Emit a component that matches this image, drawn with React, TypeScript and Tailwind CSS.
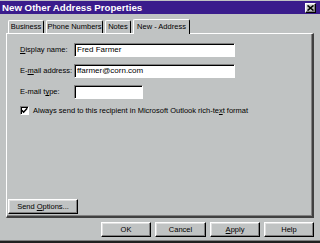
const raised =
  "border border-t-white border-l-white border-r-black border-b-black shadow-[inset_-1px_-1px_0_#808080,inset_1px_1px_0_#dfdfdf]";
const sunken =
  "border border-t-[#808080] border-l-[#808080] border-r-white border-b-white shadow-[inset_1px_1px_0_#000]";

function Field({ label, ul, rest, value, width, className = "" }: { label: string; ul: string; rest: string; value?: string; width: string; className?: string }) {
  return (
    <div className={`flex items-center ${className}`}>
      <label className="w-[54px] shrink-0 text-[7.5px] leading-none text-black">
        {label}
        <span className="underline">{ul}</span>
        {rest}
      </label>
      <div className={`${sunken} ${width} h-[14px] bg-white px-[2px] flex items-center text-[8px] leading-none text-black`}>
        {value}
      </div>
    </div>
  );
}

function Button({ children, className = "" }: { children: React.ReactNode; className?: string }) {
  return (
    <div className={`${raised} h-[15px] bg-[#c0c3c3] flex items-center justify-center text-[7.5px] leading-none text-black ${className}`}>
      <span>{children}</span>
    </div>
  );
}

export default function App() {
  const tabs = [
    { name: "Business", w: "w-[36px]" },
    { name: "Phone Numbers", w: "w-[57px]" },
    { name: "Notes", w: "w-[26px]" },
  ];
  return (
    <div className="w-[320px] h-[243px] bg-[#c0c3c3] flex flex-col overflow-hidden font-['Liberation_Sans',Arial,sans-serif] select-none">
      {/* title bar */}
      <div className="h-[14px] shrink-0 border-t border-[#c0c3c3] bg-[#3a1c8c] flex items-center pl-[2px] pr-[4px]">
        <span className="text-white font-bold text-[9.7px] leading-none">New Other Address Properties</span>
        <div className={`${raised} ml-auto w-[11px] h-[10px] bg-[#c0c3c3] flex items-center justify-center`}>
          <svg width="7" height="6" viewBox="0 0 7 6">
            <path d="M0.5 0.5 L6.5 5.5 M6.5 0.5 L0.5 5.5" stroke="#000" strokeWidth="1.6" />
          </svg>
        </div>
      </div>

      {/* tabs */}
      <div className="mt-[4px] h-[15px] shrink-0 flex items-end pl-[8px] gap-[2px] px-[6px]">
        {tabs.map((t) => (
          <div
            key={t.name}
            className={`${t.w} h-[13px] border-t border-l border-t-white border-l-white border-r border-r-black rounded-t-[2px] flex items-center justify-center text-[7.5px] leading-none text-black`}
          >
            {t.name}
          </div>
        ))}
        <div className="relative z-10 w-[57px] h-[15px] mb-[-1px] bg-[#c0c3c3] border-t border-l border-t-white border-l-white border-r border-r-black rounded-t-[2px] flex items-start pt-[3px] justify-center text-[7.5px] leading-none text-black">
          New - Address
        </div>
      </div>

      {/* tab panel */}
      <div className="mx-[6px] h-[185px] shrink-0 border-t border-l border-t-white border-l-white border-r-2 border-b-2 border-r-[#404040] border-b-[#404040] shadow-[inset_-1px_-1px_0_#808080] flex flex-col pl-[13px] pt-[9px]">
        <Field label="" ul="D" rest="isplay name:" value="Fred Farmer" width="w-[161px]" />
        <Field label="E-" ul="m" rest="ail address:" value="ffarmer@corn.com" width="w-[161px]" className="mt-[7px]" />
        <Field label="E-mail t" ul="y" rest="pe:" width="w-[69px]" className="mt-[7px]" />
        <div className="mt-[7px] flex items-center gap-[4px]">
          <div className={`${sunken} w-[9px] h-[9px] bg-white flex items-center justify-center`}>
            <svg width="7" height="7" viewBox="0 0 7 7">
              <path d="M0.8 3.2 L2.6 5.2 L6.2 1.2" stroke="#000" strokeWidth="1.5" fill="none" />
            </svg>
          </div>
          <span className="text-[7.5px] leading-none text-black">
            Always send to this recipient in Microsoft Outlook rich-te<span className="underline">x</span>t format
          </span>
        </div>
        <Button className="mt-auto mb-[2px] ml-[-12px] w-[70px]">
          Send <span className="underline">O</span>ptions...
        </Button>
      </div>

      {/* dialog buttons */}
      <div className="mt-[4px] flex pl-[101px] gap-[4px]">
        <Button className="w-[50px]">OK</Button>
        <Button className="w-[51px]">Cancel</Button>
        <Button className="w-[50px]">
          <span className="underline">A</span>pply
        </Button>
        <Button className="w-[50px]">Help</Button>
      </div>

      <div className="mt-auto h-[3px] border-t border-[#808080] bg-[#202020]" />
    </div>
  );
}
